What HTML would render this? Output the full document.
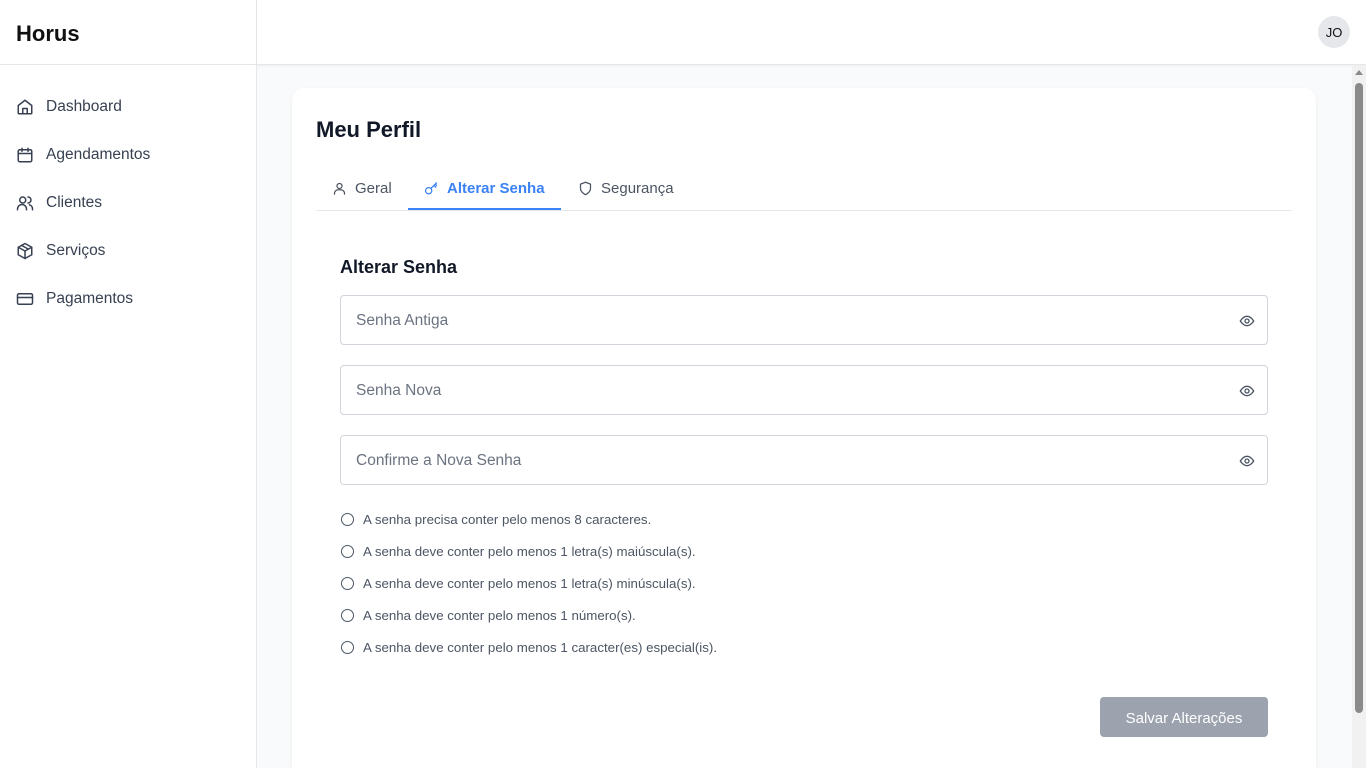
<!DOCTYPE html>
<html><head><meta charset="utf-8"><style>
*{box-sizing:border-box;margin:0;padding:0}
html,body{width:1366px;height:768px;overflow:hidden}
body{font-family:"Liberation Sans",sans-serif;background:#f9fafb;position:relative;color:#111827}
.side{position:absolute;left:0;top:0;width:257px;height:768px;background:#fff;border-right:1px solid #e5e7eb}
.logo{height:65px;border-bottom:1px solid #e5e7eb;padding:21px 16px;font-size:22px;font-weight:600;color:#111}
.nav{padding-top:18px}
.nav div{height:48px;display:flex;align-items:center;padding-left:16px;font-size:15.5px;color:#374151}
.nav svg{width:18px;height:18px;margin-right:12px;stroke:#374151;fill:none;stroke-width:2;stroke-linecap:round;stroke-linejoin:round}
.top{position:absolute;left:257px;top:0;right:0;height:65px;background:#fff;border-bottom:1px solid #e5e7eb;box-shadow:0 1px 2px rgba(0,0,0,.05)}
.av{position:absolute;right:16px;top:16px;width:32px;height:32px;border-radius:50%;background:#e5e7eb;font-size:13px;display:flex;align-items:center;justify-content:center;color:#111}
.sb{position:absolute;right:0;top:65px;width:14px;height:703px;background:#f1f1f1}
.sb i{position:absolute;left:3px;top:18px;width:8px;height:630px;background:#8a8a8a;border-radius:4px}
.sb b{position:absolute;left:3px;top:5px;border-left:4px solid transparent;border-right:4px solid transparent;border-bottom:5px solid #8a8a8a}
.card{position:absolute;left:292px;top:88px;width:1024px;height:680px;background:#fff;border-radius:12px 12px 0 0;box-shadow:0 1px 3px rgba(0,0,0,.06)}
h1{position:absolute;left:24px;top:29px;font-size:22px;font-weight:700}
.tabs{position:absolute;left:24px;top:79px;width:976px;height:44px;border-bottom:1px solid #e5e7eb}
.tab{position:absolute;top:0;height:43px;display:flex;align-items:center;font-size:15px;color:#4b5563;border-bottom:2px solid transparent;padding-top:2px}
.tab svg{width:15px;height:15px;margin-right:8px;fill:none;stroke:#4b5563;stroke-width:2;stroke-linecap:round;stroke-linejoin:round}
.tab.a{color:#3b82f6;font-weight:600;border-bottom:2px solid #3b82f6}
.tab.a svg{stroke:#3b82f6}
h2{position:absolute;left:48px;top:169px;font-size:18px;font-weight:700}
.in{position:absolute;left:48px;width:928px;height:50px;border:1px solid #d1d5db;border-radius:4px;padding:2px 15px 0;display:flex;align-items:center;font-size:15.5px;color:#6b7280}
.in svg{position:absolute;right:12px;top:17px;width:16px;height:16px;fill:none;stroke:#4b5563;stroke-width:2}
.req{position:absolute;left:49px;font-size:13.3px;color:#4b5563;display:flex;align-items:center}
.req span{width:13px;height:13px;border:1.3px solid #4b5563;border-radius:50%;margin-right:9px}
.btn{position:absolute;left:808px;top:609px;width:168px;height:40px;background:#9ca3af;color:#fff;border-radius:4px;font-size:15px;display:flex;align-items:center;justify-content:center;padding-top:2px}
</style></head><body>
<div class="side"><div class="logo">Horus</div>
<div class="nav">
<div><svg viewBox="0 0 24 24"><path d="M3 10l9-7 9 7v10a1 1 0 0 1-1 1H4a1 1 0 0 1-1-1z"/><path d="M9 21v-7h6v7"/></svg>Dashboard</div>
<div><svg viewBox="0 0 24 24"><rect x="3" y="5" width="18" height="16" rx="2"/><path d="M8 3v4M16 3v4M3 10h18"/></svg>Agendamentos</div>
<div><svg viewBox="0 0 24 24"><circle cx="9" cy="8" r="4"/><path d="M2 21v-1a6 6 0 0 1 12 0v1M16 4a4 4 0 0 1 0 8M22 21v-1a6 6 0 0 0-4-5.6"/></svg>Clientes</div>
<div><svg viewBox="0 0 24 24"><path d="M12 2l9 5v10l-9 5-9-5V7z"/><path d="M3 7l9 5 9-5M12 12v10M7.5 4.5l9 5"/></svg>Serviços</div>
<div><svg viewBox="0 0 24 24"><rect x="2" y="5" width="20" height="14" rx="2"/><path d="M2 10h20"/></svg>Pagamentos</div>
</div></div>
<div class="top"><div class="av">JO</div></div>
<div class="sb"><b></b><i></i></div>
<div class="card">
<h1>Meu Perfil</h1>
<div class="tabs">
<div class="tab" style="left:16px"><svg viewBox="0 0 24 24"><circle cx="12" cy="8" r="4"/><path d="M4 21v-1a6 6 0 0 1 6-6h4a6 6 0 0 1 6 6v1"/></svg>Geral</div>
<div class="tab a" style="left:92px;padding:2px 16px 0"><svg viewBox="0 0 24 24"><circle cx="7.5" cy="15.5" r="5"/><path d="M11 12l9-9M16 7l3 3M18 5l2 2"/></svg>Alterar Senha</div>
<div class="tab" style="left:262px"><svg viewBox="0 0 24 24"><path d="M12 22s8-4 8-10V5l-8-3-8 3v7c0 6 8 10 8 10z"/></svg>Segurança</div>
</div>
<h2>Alterar Senha</h2>
<div class="in" style="top:207px">Senha Antiga<svg viewBox="0 0 24 24"><path d="M2 12s4-7 10-7 10 7 10 7-4 7-10 7S2 12 2 12z"/><circle cx="12" cy="12" r="3"/></svg></div>
<div class="in" style="top:277px">Senha Nova<svg viewBox="0 0 24 24"><path d="M2 12s4-7 10-7 10 7 10 7-4 7-10 7S2 12 2 12z"/><circle cx="12" cy="12" r="3"/></svg></div>
<div class="in" style="top:347px">Confirme a Nova Senha<svg viewBox="0 0 24 24"><path d="M2 12s4-7 10-7 10 7 10 7-4 7-10 7S2 12 2 12z"/><circle cx="12" cy="12" r="3"/></svg></div>
<div class="req" style="top:424px"><span></span>A senha precisa conter pelo menos 8 caracteres.</div>
<div class="req" style="top:456px"><span></span>A senha deve conter pelo menos 1 letra(s) maiúscula(s).</div>
<div class="req" style="top:488px"><span></span>A senha deve conter pelo menos 1 letra(s) minúscula(s).</div>
<div class="req" style="top:520px"><span></span>A senha deve conter pelo menos 1 número(s).</div>
<div class="req" style="top:552px"><span></span>A senha deve conter pelo menos 1 caracter(es) especial(is).</div>
<div class="btn">Salvar Alterações</div>
</div>
</body></html>
